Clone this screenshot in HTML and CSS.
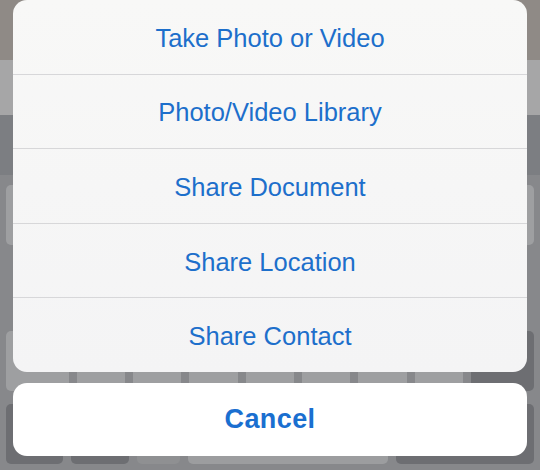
FILE: index.html
```html
<!DOCTYPE html>
<html lang="en">

<head>
    <meta charset="UTF-8">
    <meta name="viewport" content="width=device-width, initial-scale=1.0">
    <title>Action Sheet</title>
    <link rel="stylesheet" href="styles.css">
</head>

<body>
    <div class="screen">
        <!-- Dimmed app content behind the sheet -->
        <div class="backdrop">
            <div class="top-band"></div>
            <div class="input-band"></div>
            <div class="toolbar-band"></div>
            <div class="keyboard">
                <div class="key-row">
                    <div class="key"></div>
                    <div class="key"></div>
                    <div class="key"></div>
                    <div class="key"></div>
                    <div class="key"></div>
                    <div class="key"></div>
                    <div class="key"></div>
                    <div class="key"></div>
                    <div class="key"></div>
                    <div class="key"></div>
                </div>
                <div class="key-row indented">
                    <div class="key"></div>
                    <div class="key"></div>
                    <div class="key"></div>
                    <div class="key"></div>
                    <div class="key"></div>
                    <div class="key"></div>
                    <div class="key"></div>
                    <div class="key"></div>
                    <div class="key"></div>
                </div>
                <div class="key-row">
                    <div class="key shift"></div>
                    <div class="key"></div>
                    <div class="key"></div>
                    <div class="key"></div>
                    <div class="key"></div>
                    <div class="key"></div>
                    <div class="key"></div>
                    <div class="key"></div>
                    <div class="key dark shift"></div>
                </div>
                <div class="key-row">
                    <div class="key dark"></div>
                    <div class="key dark"></div>
                    <div class="key mid small"></div>
                    <div class="key space"></div>
                    <div class="key dark return"></div>
                </div>
            </div>
        </div>

        <!-- Action sheet -->
        <div class="sheet">
            <div class="sheet-group">
                <button class="sheet-item">Take Photo or Video</button>
                <button class="sheet-item">Photo/Video Library</button>
                <button class="sheet-item">Share Document</button>
                <button class="sheet-item">Share Location</button>
                <button class="sheet-item">Share Contact</button>
            </div>
            <button class="sheet-cancel">Cancel</button>
        </div>
    </div>
</body>

</html>
```

FILE: styles.css
```css
/* Page */
body {
    margin: 0;
    font-family: 'Liberation Sans', Arial, sans-serif;
    background-color: #86888b;
}

.screen {
    position: relative;
    width: 540px;
    height: 470px;
    overflow: hidden;
}

/* Blurred content behind the sheet */
.backdrop {
    display: flex;
    flex-direction: column;
    height: 100%;
}

.top-band {
    height: 60px;
    background-color: #8f8a86;
}

.input-band {
    height: 55px;
    background-color: #a6a6a7;
}

.toolbar-band {
    height: 60px;
    background-color: #7c7e82;
}

.keyboard {
    flex: 1;
    display: flex;
    flex-direction: column;
    gap: 13px;
    padding: 10px 6px 0 6px;
    background-color: #87888b;
}

.key-row {
    display: flex;
    gap: 8px;
    height: 60px;
}

.key-row.indented {
    padding: 0 26px;
}

.key {
    flex: 1;
    border-radius: 5px;
    background-color: #9e9fa1;
}

.key.shift {
    flex: 1.3;
}

.key.dark {
    background-color: #6d6e72;
}

.key.mid {
    background-color: #8f9092;
}

.key.small {
    flex: 0.75;
}

.key.space {
    flex: 3.5;
    background-color: #9c9d9f;
}

.key.return {
    flex: 2.4;
}

/* Action sheet */
.sheet {
    position: absolute;
    top: 0;
    left: 13px;
    right: 13px;
    display: flex;
    flex-direction: column;
    gap: 11px;
}

.sheet-group {
    display: flex;
    flex-direction: column;
    height: 372px;
    border-radius: 14px;
    overflow: hidden;
    background: linear-gradient(#f8f8f7, #f4f4f5);
}

.sheet-item {
    flex: 1;
    border: none;
    border-top: 1px solid #d7d7d9;
    background: none;
    padding: 3px 0 0 0;
    font-family: inherit;
    font-size: 25.5px;
    color: #1d6fcb;
    cursor: pointer;
}

.sheet-item:first-child {
    border-top: none;
}

.sheet-cancel {
    height: 73px;
    border: none;
    border-radius: 14px;
    background-color: #ffffff;
    padding: 0;
    font-family: inherit;
    font-size: 27px;
    font-weight: bold;
    letter-spacing: 0.4px;
    color: #1a6fd0;
    cursor: pointer;
}
```
